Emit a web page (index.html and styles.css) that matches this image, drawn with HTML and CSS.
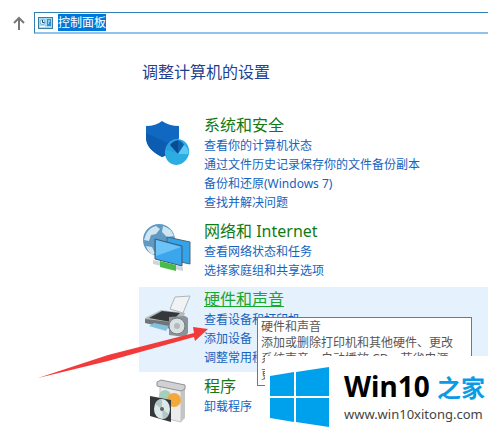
FILE: index.html
```
<!DOCTYPE html>
<html lang="zh-CN">
<head>
    <meta charset="UTF-8">
    <meta name="viewport" content="width=device-width, initial-scale=1.0">
    <title>控制面板</title>
    <link rel="stylesheet" href="styles.css">
</head>
<body>
    <header class="toolbar">
        <button class="up" type="button" aria-label="上移">
            <svg width="14" height="14" viewBox="0 0 14 14"><path d="M7 14V2M2 7l5-5 5 5" fill="none" stroke="#777" stroke-width="2"/></svg>
        </button>
        <div class="address">
            <svg width="15" height="12" viewBox="0 0 15 12">
                <rect x="0.5" y="0.5" width="14" height="11" fill="#a5dcf5" stroke="#3c7d9e"/>
                <circle cx="4.5" cy="5" r="2.5" fill="#e8f7fd" stroke="#6bb3dc"/>
                <path d="M4.5 3v2.5h2" fill="none" stroke="#246"/>
                <path d="M9 2h4v7H9z" fill="#2f8ed0"/>
                <path d="M10 4h2M10 6h1M2 9.5h5" stroke="#fff"/>
            </svg>
            <input id="path" type="text" value="控制面板" aria-label="地址">
        </div>
    </header>

    <main class="panel">
        <h1>调整计算机的设置</h1>

        <section class="category">
            <svg class="icon" width="48" height="48" viewBox="0 0 48 48">
                <path d="M3 8Q13 8 19 3q7 5 17 5v11c0 9-7 15-17 20C9 34 3 28 3 19z" fill="#1168c0"/>
                <path d="M3 15L36 30q-4 5-17 9C9 34 3 28 3 19z" fill="#0c5cb2"/>
                <ellipse cx="34" cy="34" rx="12" ry="13" fill="#2cade2" transform="rotate(20 34 34)"/>
                <path d="M34 35l-1-14c-6 1-9 5-10 11z" fill="#2a9fe0"/>
                <path d="M35 36l-8-9q3-4 8-5z" fill="#0a4a90"/>
                <path d="M35 36v-14q5 2 6 5z" fill="#0f5fac"/>
                <path d="M35 36l6-9c4 3 5 6 4 9z" fill="#5cc9ef"/>
            </svg>
            <div class="text">
                <h2><a href="#">系统和安全</a></h2>
                <ul>
                    <li><a href="#">查看你的计算机状态</a></li>
                    <li><a href="#">通过文件历史记录保存你的文件备份副本</a></li>
                    <li><a href="#">备份和还原(Windows 7)</a></li>
                    <li><a href="#">查找并解决问题</a></li>
                </ul>
            </div>
        </section>

        <section class="category">
            <svg class="icon" width="48" height="48" viewBox="0 0 48 48">
                <circle cx="16" cy="16" r="16" fill="#5f9ac4"/>
                <path d="M3 10q4-7 10-8l4 3-4 5-5 1-2 6-5-1zM20 2q8 2 11 10l-7 1-5-5zM3 22l6 1 3 6-2 2q-6-4-7-9z" fill="#d0e5ef"/>
                <path d="M24 13l23 5v22l-23-5z" fill="#35a3ea" stroke="#48677c"/>
                <path d="M12 15l27 7v20l-27-7z" fill="#3ba6ee" stroke="#3b5b70"/>
                <path d="M13 16l25 7-25 9z" fill="#6cc3f7"/>
                <path d="M10 36l30 7v4l-30-7z" fill="#cdd6d8"/>
                <path d="M17 37l16 4v6l-16-4z" fill="#4aba48"/>
            </svg>
            <div class="text">
                <h2><a href="#">网络和 Internet</a></h2>
                <ul>
                    <li><a href="#">查看网络状态和任务</a></li>
                    <li><a href="#">选择家庭组和共享选项</a></li>
                </ul>
            </div>
        </section>

        <section class="category hover">
            <svg class="icon" width="48" height="48" viewBox="0 0 48 48">
                <path d="M27 17l5-12 15-1-7 17z" fill="#f0f2f3" stroke="#aeb5b9"/>
                <path d="M2 26l16-8 24 3-3 8-12 4-25-3z" fill="#b5babb"/>
                <path d="M6 26l13-7 18 2-9 9z" fill="#35393b"/>
                <path d="M2 27l26 3v7L2 31z" fill="#6f7578"/>
                <path d="M6 34l5-3 15 3-3 5z" fill="#83c2df"/>
                <path d="M26 25l16-1 3 2v15l-3 4-16-2z" fill="#8b9398"/>
                <circle cx="34" cy="34" r="8" fill="#dbe0e2" stroke="#717b80"/>
                <circle cx="34" cy="34" r="3" fill="#b2babe"/>
            </svg>
            <div class="text">
                <h2><a href="#">硬件和声音</a></h2>
                <ul>
                    <li><a href="#">查看设备和打印机</a></li>
                    <li><a href="#">添加设备</a></li>
                    <li><a href="#">调整常用移动设置</a></li>
                </ul>
            </div>
            <svg class="arrow" width="170" height="56" viewBox="0 0 170 56">
                <path d="M0 54L70 31l86-22-1-6 15 2-13 12-1-4L70 37z" fill="#f33a3a"/>
            </svg>
            <div class="tooltip" role="tooltip">硬件和声音<br>添加或删除打印机和其他硬件、更改系统声音、自动播放 CD、节省电源、更新设备驱动程序等。</div>
        </section>

        <section class="category">
            <svg class="icon" width="48" height="48" viewBox="0 0 48 48">
                <path d="M17 6l21 5v32l-21-5z" fill="#ececeb" stroke="#c4c4c4"/>
                <path d="M38 9l4-2v32l-4 4z" fill="#c3c5c4"/>
                <path d="M14 3l4-2 24 5v4l-4 2-24-5z" fill="#d1d1d3" stroke="#929296"/>
                <circle cx="22" cy="17" r="6" fill="#a4cfbd"/>
                <circle cx="31" cy="21" r="7" fill="#f3a83e"/>
                <path d="M7 17l21 4v22L7 37z" fill="#34383a"/>
                <ellipse cx="19" cy="30" rx="8" ry="10" fill="#dce7e7"/>
                <path d="M19 30l-7-5q2-5 7-5zM19 30l7 5q-2 5-6 5z" fill="#b2c7c8"/>
                <circle cx="19" cy="30" r="2" fill="#596365"/>
            </svg>
            <div class="text">
                <h2><a href="#">程序</a></h2>
                <ul>
                    <li><a href="#">卸载程序</a></li>
                </ul>
            </div>
        </section>
    </main>

    <aside class="watermark">
        <svg width="59" height="60" viewBox="0 0 59 60">
            <path d="M0 9l24-4v24H0zM26 5l33-5v29H26zM0 31h24v24L0 51zM26 31h33v29l-33-5z" fill="#00a1ec"/>
        </svg>
        <div>
            <div class="brand">Win10 <span>之家</span></div>
            <div class="site">www.win10xitong.com</div>
        </div>
    </aside>
    <script>
        document.getElementById('path').select();
    </script>
</body>
</html>
```
FILE: styles.css
```
* {
    box-sizing: border-box;
}
body {
    margin: 0;
    overflow: hidden;
    background: #fff;
    font-family: "Noto Sans", "Noto Sans CJK SC", sans-serif;
    font-size: 12px;
}
a {
    color: #1463be;
    text-decoration: none;
}
.toolbar {
    display: flex;
    align-items: center;
    padding: 12px 12px 0;
}
.up {
    display: flex;
    width: 22px;
    padding: 0;
    border: 0;
    background: none;
}
.address {
    flex: 1;
    display: flex;
    align-items: center;
    gap: 5px;
    height: 22px;
    padding-left: 3px;
    border: 1px solid #2f7fb5;
    border-right: 0;
    border-bottom: 2px solid #8fc3ec;
}
.address input {
    flex: 1;
    min-width: 0;
    height: 17px;
    padding: 0;
    border: 0;
    outline: 0;
    font: inherit;
    line-height: 17px;
}
.address input::selection {
    background: #0078d7;
    color: #fff;
}
.panel {
    padding: 26px 12px 0 139px;
}
h1 {
    margin: 0 0 29px;
    padding-left: 3px;
    color: #1f3f8f;
    font-size: 16px;
    font-weight: normal;
    line-height: 24px;
}
.category {
    position: relative;
    display: flex;
    gap: 13px;
    margin-bottom: 2px;
    padding: 1px 4px 5px;
}
.category.hover {
    background: #e5f1fc;
}
.icon {
    flex: none;
    margin-top: 4px;
}
h2 {
    margin: 0;
    font-size: 16px;
    font-weight: normal;
    line-height: 22px;
}
h2 a {
    color: #137a13;
}
.hover h2 a {
    color: #18a82c;
    text-decoration: underline;
}
ul {
    margin: 0;
    padding: 0;
    list-style: none;
    line-height: 19px;
}
.arrow {
    position: absolute;
    top: 37px;
    left: -101px;
    z-index: 1;
}
.tooltip {
    position: absolute;
    top: 30px;
    left: 118px;
    z-index: 1;
    width: 215px;
    padding: 1px 9px 2px 3px;
    border: 1px solid #777;
    background: #fff;
    color: #575757;
    line-height: 16px;
}
.watermark {
    position: absolute;
    right: 0;
    bottom: 0;
    z-index: 2;
    display: flex;
    align-items: center;
    gap: 15px;
    width: 235px;
    height: 82px;
    padding-left: 5px;
    background: #fff;
}
.brand {
    color: #000;
    font-size: 28px;
    font-weight: bold;
    line-height: 32px;
    white-space: nowrap;
}
.brand span {
    color: #0b9be5;
    font-size: 24px;
}
.site {
    color: #444;
    font-size: 13px;
    line-height: 20px;
}
```
